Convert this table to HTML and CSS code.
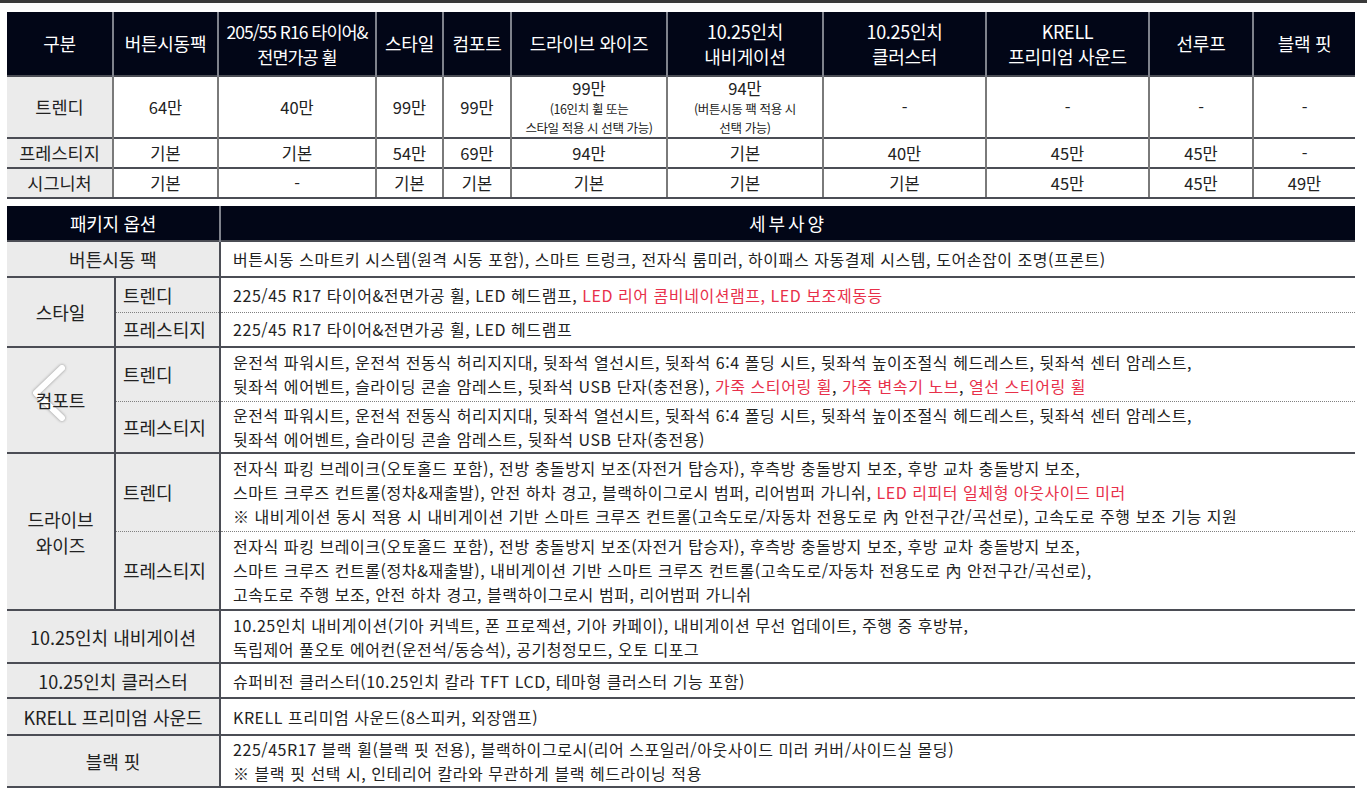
FILE: index.html
```html
<!DOCTYPE html>
<html lang="ko">
<head>
<meta charset="utf-8">
<title>옵션 표</title>
<link rel="stylesheet" href="styles.css">
</head>
<body>
<div class="topbar"></div>
<div class="page">
  <table class="t1">
    <colgroup>
      <col style="width:106px"><col style="width:105px"><col style="width:158px"><col style="width:67px"><col style="width:68px"><col style="width:156px"><col style="width:156px"><col style="width:163px"><col style="width:163px"><col style="width:104px"><col style="width:102px">
    </colgroup>
    <tr class="h">
      <th>구분</th>
      <th>버튼시동팩</th>
      <th class="tight">205/55 R16 타이어&amp;<br>전면가공 휠</th>
      <th>스타일</th>
      <th>컴포트</th>
      <th>드라이브 와이즈</th>
      <th>10.25인치<br>내비게이션</th>
      <th>10.25인치<br>클러스터</th>
      <th>KRELL<br>프리미엄 사운드</th>
      <th>선루프</th>
      <th>블랙 핏</th>
    </tr>
    <tr class="r1">
      <td class="lbl">트렌디</td>
      <td>64만</td>
      <td>40만</td>
      <td>99만</td>
      <td>99만</td>
      <td><span class="big">99만</span><span class="note">(16인치 휠 또는<br>스타일 적용 시 선택 가능)</span></td>
      <td><span class="big">94만</span><span class="note">(버튼시동 팩 적용 시<br>선택 가능)</span></td>
      <td>-</td>
      <td>-</td>
      <td>-</td>
      <td>-</td>
    </tr>
    <tr class="r2">
      <td class="lbl">프레스티지</td>
      <td>기본</td>
      <td>기본</td>
      <td>54만</td>
      <td>69만</td>
      <td>94만</td>
      <td>기본</td>
      <td>40만</td>
      <td>45만</td>
      <td>45만</td>
      <td>-</td>
    </tr>
    <tr class="r2 last">
      <td class="lbl">시그니처</td>
      <td>기본</td>
      <td>-</td>
      <td>기본</td>
      <td>기본</td>
      <td>기본</td>
      <td>기본</td>
      <td>기본</td>
      <td>45만</td>
      <td>45만</td>
      <td>49만</td>
    </tr>
  </table>

  <table class="t2">
    <colgroup>
      <col style="width:108px"><col style="width:105px"><col style="width:1135px">
    </colgroup>
    <tr class="h">
      <th colspan="2" class="hl">패키지 옵션</th>
      <th class="spec">세부사양</th>
    </tr>
    <tr class="major" style="height:36px">
      <td class="lbl" colspan="2">버튼시동 팩</td>
      <td class="desc">버튼시동 스마트키 시스템(원격 시동 포함), 스마트 트렁크, 전자식 룸미러, 하이패스 자동결제 시스템, 도어손잡이 조명(프론트)</td>
    </tr>
    <tr class="major" style="height:35px">
      <td class="lbl" rowspan="2">스타일</td>
      <td class="sub">트렌디</td>
      <td class="desc">225/45 R17 타이어&amp;전면가공 휠, LED 헤드램프, <span class="red">LED 리어 콤비네이션램프, LED 보조제동등</span></td>
    </tr>
    <tr class="minor" style="height:35px">
      <td class="sub">프레스티지</td>
      <td class="desc">225/45 R17 타이어&amp;전면가공 휠, LED 헤드램프</td>
    </tr>
    <tr class="major" style="height:54px">
      <td class="lbl comfort" rowspan="2">
        <svg class="chev" width="44" height="64" viewBox="0 0 44 64" aria-hidden="true"><polyline points="36,6 10,31 36,56" fill="none" stroke="#ffffff" stroke-width="6" stroke-linecap="round" stroke-linejoin="round"/></svg>
        <span class="lbltext">컴포트</span>
      </td>
      <td class="sub">트렌디</td>
      <td class="desc">운전석 파워시트, 운전석 전동식 허리지지대, 뒷좌석 열선시트, 뒷좌석 6:4 폴딩 시트, 뒷좌석 높이조절식 헤드레스트, 뒷좌석 센터 암레스트,<br>뒷좌석 에어벤트, 슬라이딩 콘솔 암레스트, 뒷좌석 USB 단자(충전용), <span class="red">가죽 스티어링 휠</span>, <span class="red">가죽 변속기 노브</span>, <span class="red">열선 스티어링 휠</span></td>
    </tr>
    <tr class="minor" style="height:52px">
      <td class="sub">프레스티지</td>
      <td class="desc">운전석 파워시트, 운전석 전동식 허리지지대, 뒷좌석 열선시트, 뒷좌석 6:4 폴딩 시트, 뒷좌석 높이조절식 헤드레스트, 뒷좌석 센터 암레스트,<br>뒷좌석 에어벤트, 슬라이딩 콘솔 암레스트, 뒷좌석 USB 단자(충전용)</td>
    </tr>
    <tr class="major" style="height:78px">
      <td class="lbl" rowspan="2">드라이브<br>와이즈</td>
      <td class="sub">트렌디</td>
      <td class="desc">전자식 파킹 브레이크(오토홀드 포함), 전방 충돌방지 보조(자전거 탑승자), 후측방 충돌방지 보조, 후방 교차 충돌방지 보조,<br>스마트 크루즈 컨트롤(정차&amp;재출발), 안전 하차 경고, 블랙하이그로시 범퍼, 리어범퍼 가니쉬, <span class="red">LED 리피터 일체형 아웃사이드 미러</span><br>※ 내비게이션 동시 적용 시 내비게이션 기반 스마트 크루즈 컨트롤(고속도로/자동차 전용도로 內 안전구간/곡선로), 고속도로 주행 보조 기능 지원</td>
    </tr>
    <tr class="minor" style="height:79px">
      <td class="sub">프레스티지</td>
      <td class="desc">전자식 파킹 브레이크(오토홀드 포함), 전방 충돌방지 보조(자전거 탑승자), 후측방 충돌방지 보조, 후방 교차 충돌방지 보조,<br>스마트 크루즈 컨트롤(정차&amp;재출발), 내비게이션 기반 스마트 크루즈 컨트롤(고속도로/자동차 전용도로 內 안전구간/곡선로),<br>고속도로 주행 보조, 안전 하차 경고, 블랙하이그로시 범퍼, 리어범퍼 가니쉬</td>
    </tr>
    <tr class="major" style="height:53px">
      <td class="lbl" colspan="2">10.25인치 내비게이션</td>
      <td class="desc">10.25인치 내비게이션(기아 커넥트, 폰 프로젝션, 기아 카페이), 내비게이션 무선 업데이트, 주행 중 후방뷰,<br>독립제어 풀오토 에어컨(운전석/동승석), 공기청정모드, 오토 디포그</td>
    </tr>
    <tr class="major" style="height:35px">
      <td class="lbl" colspan="2">10.25인치 클러스터</td>
      <td class="desc">슈퍼비전 클러스터(10.25인치 칼라 TFT LCD, 테마형 클러스터 기능 포함)</td>
    </tr>
    <tr class="major" style="height:37px">
      <td class="lbl" colspan="2">KRELL 프리미엄 사운드</td>
      <td class="desc">KRELL 프리미엄 사운드(8스피커, 외장앰프)</td>
    </tr>
    <tr class="major last" style="height:52px">
      <td class="lbl" colspan="2">블랙 핏</td>
      <td class="desc">225/45R17 블랙 휠(블랙 핏 전용), 블랙하이그로시(리어 스포일러/아웃사이드 미러 커버/사이드실 몰딩)<br>※ 블랙 핏 선택 시, 인테리어 칼라와 무관하게 블랙 헤드라이닝 적용</td>
    </tr>
  </table>
</div>
</body>
</html>
```

FILE: styles.css
```css
* { box-sizing: border-box; }

body {
  margin: 0;
  background: #ffffff;
  font-family: "Noto Sans CJK KR", "Noto Sans", sans-serif;
  color: #222222;
}

.topbar {
  height: 3px;
  background: #3a3a3a;
}

.page {
  padding: 9px 12px 0 7px;
}

table {
  border-collapse: collapse;
  table-layout: fixed;
  width: 1348px;
}

th {
  background: #020617;
  color: #ffffff;
  font-weight: 400;
  font-size: 18px;
  letter-spacing: -0.3px;
  padding: 0;
  text-align: center;
  vertical-align: middle;
}

td {
  padding: 0;
  vertical-align: middle;
}

/* table 1 */
.t1 tr.h { height: 64px; }
.t1 tr.r1 { height: 62px; }
.t1 tr.r2 { height: 30px; }

.t1 th {
  line-height: 25px;
  border-left: 2px solid #7f828c;
}
.t1 th:first-child { border-left: none; }
.t1 th.tight { font-size: 17.5px; letter-spacing: -1px; }

.t1 td {
  text-align: center;
  font-size: 16.5px;
  line-height: 24px;
  border-left: 2px solid #7a7a7a;
  border-top: 2px solid #4b4d55;
}
.t1 tr.last td { border-bottom: 2px solid #4b4d55; }

.t1 td.lbl {
  background: #ebebeb;
  font-size: 17.5px;
  border-left: none;
}

.t1 .big {
  display: block;
  font-size: 16.5px;
  line-height: 23px;
}
.t1 .note {
  display: block;
  font-size: 12.5px;
  line-height: 18.2px;
  letter-spacing: -0.4px;
}

/* table 2 */
.t2 { margin-top: 7px; }

.t2 tr.h { height: 35px; }

.t2 th.hl { border-right: 2px solid #7f828c; }
.t2 th.spec { letter-spacing: 3px; }

.t2 td.lbl {
  background: #ebebeb;
  text-align: center;
  font-size: 18px;
  line-height: 26px;
}
.t2 td.sub {
  background: #ebebeb;
  font-size: 18px;
  padding-left: 7px;
  border-left: 2px solid #4b4d55;
}
.t2 td.desc {
  font-size: 16px;
  line-height: 24px;
  letter-spacing: 0.55px;
  white-space: nowrap;
  padding-left: 12px;
  border-left: 2px solid #4b4d55;
}

.t2 tr.major td { border-top: 2px solid #4b4d55; }
.t2 tr.minor td { border-top: 1px dotted #808080; }
.t2 tr.last td { border-bottom: 2px solid #4b4d55; }

.red { color: #e8304a; }

.comfort { position: relative; }
.chev {
  position: absolute;
  left: 19px;
  top: 14px;
  filter: drop-shadow(0 0 1.5px rgba(0, 0, 0, 0.4));
}
.lbltext {
  position: relative;
}
```
